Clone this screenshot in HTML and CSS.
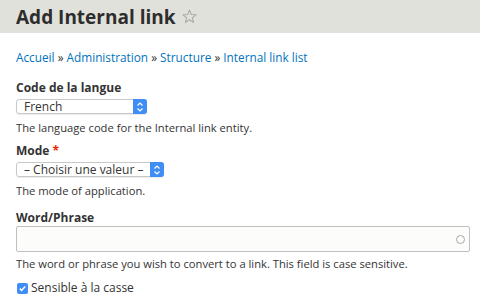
FILE: index.html
```html
<!DOCTYPE html>
<html lang="fr">
<head>
  <meta charset="UTF-8" />
  <title>Add Internal link</title>
  <link rel="stylesheet" href="styles.css">
</head>
<body>

  <!-- Page title -->
  <div class="page-header">
    <h1>Add Internal link</h1>
    <svg class="star" width="15" height="15" viewBox="0 0 16 16">
      <path d="M8 1.2 L9.9 5.9 L14.9 6.2 L11 9.4 L12.3 14.3 L8 11.5 L3.7 14.3 L5 9.4 L1.1 6.2 L6.1 5.9 Z" fill="none" stroke="#a8a8a4" stroke-width="1.1" stroke-linejoin="round"/>
    </svg>
  </div>

  <div class="content">
    <div class="breadcrumb">
      <a href="#">Accueil</a> &raquo; <a href="#">Administration</a> &raquo; <a href="#">Structure</a> &raquo; <a href="#">Internal link list</a>
    </div>

    <form>
      <div class="form-item">
        <label>Code de la langue</label>
        <div class="select-wrap lang">
          <span class="select-value">French</span>
          <span class="select-arrow">
            <svg width="8" height="12" viewBox="0 0 8 12"><path d="M1.5 4.5 L4 2 L6.5 4.5 M1.5 7.5 L4 10 L6.5 7.5" fill="none" stroke="#fff" stroke-width="1.2"/></svg>
          </span>
        </div>
        <div class="description">The language code for the Internal link entity.</div>
      </div>

      <div class="form-item">
        <label>Mode <span class="required">*</span></label>
        <div class="select-wrap mode">
          <span class="select-value">&ndash; Choisir une valeur &ndash;</span>
          <span class="select-arrow">
            <svg width="8" height="12" viewBox="0 0 8 12"><path d="M1.5 4.5 L4 2 L6.5 4.5 M1.5 7.5 L4 10 L6.5 7.5" fill="none" stroke="#fff" stroke-width="1.2"/></svg>
          </span>
        </div>
        <div class="description">The mode of application.</div>
      </div>

      <div class="form-item text-item">
        <label>Word/Phrase</label>
        <div class="text-field">
          <span class="throbber"></span>
        </div>
        <div class="description">The word or phrase you wish to convert to a link. This field is case sensitive.</div>
      </div>

      <div class="checkbox-item">
        <span class="checkbox">
          <svg width="11" height="11" viewBox="0 0 11 11"><path d="M2.8 5.6 L4.6 7.4 L8.2 3.6" fill="none" stroke="#fff" stroke-width="1.5"/></svg>
        </span>
        <span>Sensible à la casse</span>
      </div>
    </form>
  </div>

</body>
</html>
```

FILE: styles.css
```css
body {
  font-family: "Open Sans", sans-serif;
  background: #fff;
  color: #333;
  margin: 0;
  padding: 0;
}
.page-header {
  background: #e1e1db;
  height: 33px;
  display: flex;
  align-items: center;
  padding: 0 16px;
}
h1 {
  font-size: 19px;
  font-weight: bold;
  color: #2d2d2d;
  margin: 0;
}
.star {
  margin-left: 6px;
}
.content {
  padding: 16px 10px 0 16px;
}
.breadcrumb {
  font-size: 11.8px;
  line-height: 16px;
  margin-bottom: 15px;
}
.breadcrumb a {
  color: #0074bd;
  text-decoration: none;
}
.form-item {
  margin-bottom: 8px;
}
label {
  display: block;
  font-size: 12px;
  line-height: 16px;
  font-weight: bold;
  margin-bottom: 3px;
}
.required {
  color: #e62600;
}
.select-wrap {
  display: flex;
  height: 15px;
  border: 1px solid #c8c8c8;
  border-radius: 3px;
  box-sizing: border-box;
  font-size: 12px;
  align-items: center;
  white-space: nowrap;
  box-shadow: 0 1px 1px rgba(0, 0, 0, 0.08);
}
.select-wrap.lang {
  width: 131px;
}
.select-wrap.mode {
  width: 148px;
}
.select-value {
  flex: 1;
  padding-left: 7px;
  line-height: 13px;
}
.select-arrow {
  width: 14px;
  height: 15px;
  margin: -1px -1px -1px 0;
  background: #3f8ef5;
  border-radius: 0 3px 3px 0;
  display: flex;
  align-items: center;
  justify-content: center;
}
.description {
  font-size: 11.2px;
  line-height: 15px;
  margin-top: 6px;
}
.text-item {
  margin-top: 12px;
}
.text-item label {
  margin-bottom: 0;
}
.text-item .description {
  margin-top: 4px;
}
.text-field {
  height: 26px;
  border: 1px solid #c0c0c0;
  border-radius: 2px;
  background: #fcfcfa;
  box-sizing: border-box;
  display: flex;
  align-items: center;
  justify-content: flex-end;
  padding-right: 4px;
}
.throbber {
  width: 7px;
  height: 7px;
  border: 1.5px solid #aaa;
  border-radius: 50%;
}
.checkbox-item {
  display: flex;
  align-items: center;
  gap: 3px;
  font-size: 12px;
  line-height: 16px;
  margin-top: 9px;
}
.checkbox {
  width: 11px;
  height: 11px;
  background: #3f8ef5;
  border-radius: 2px;
  margin-left: 1px;
  display: flex;
}
```
